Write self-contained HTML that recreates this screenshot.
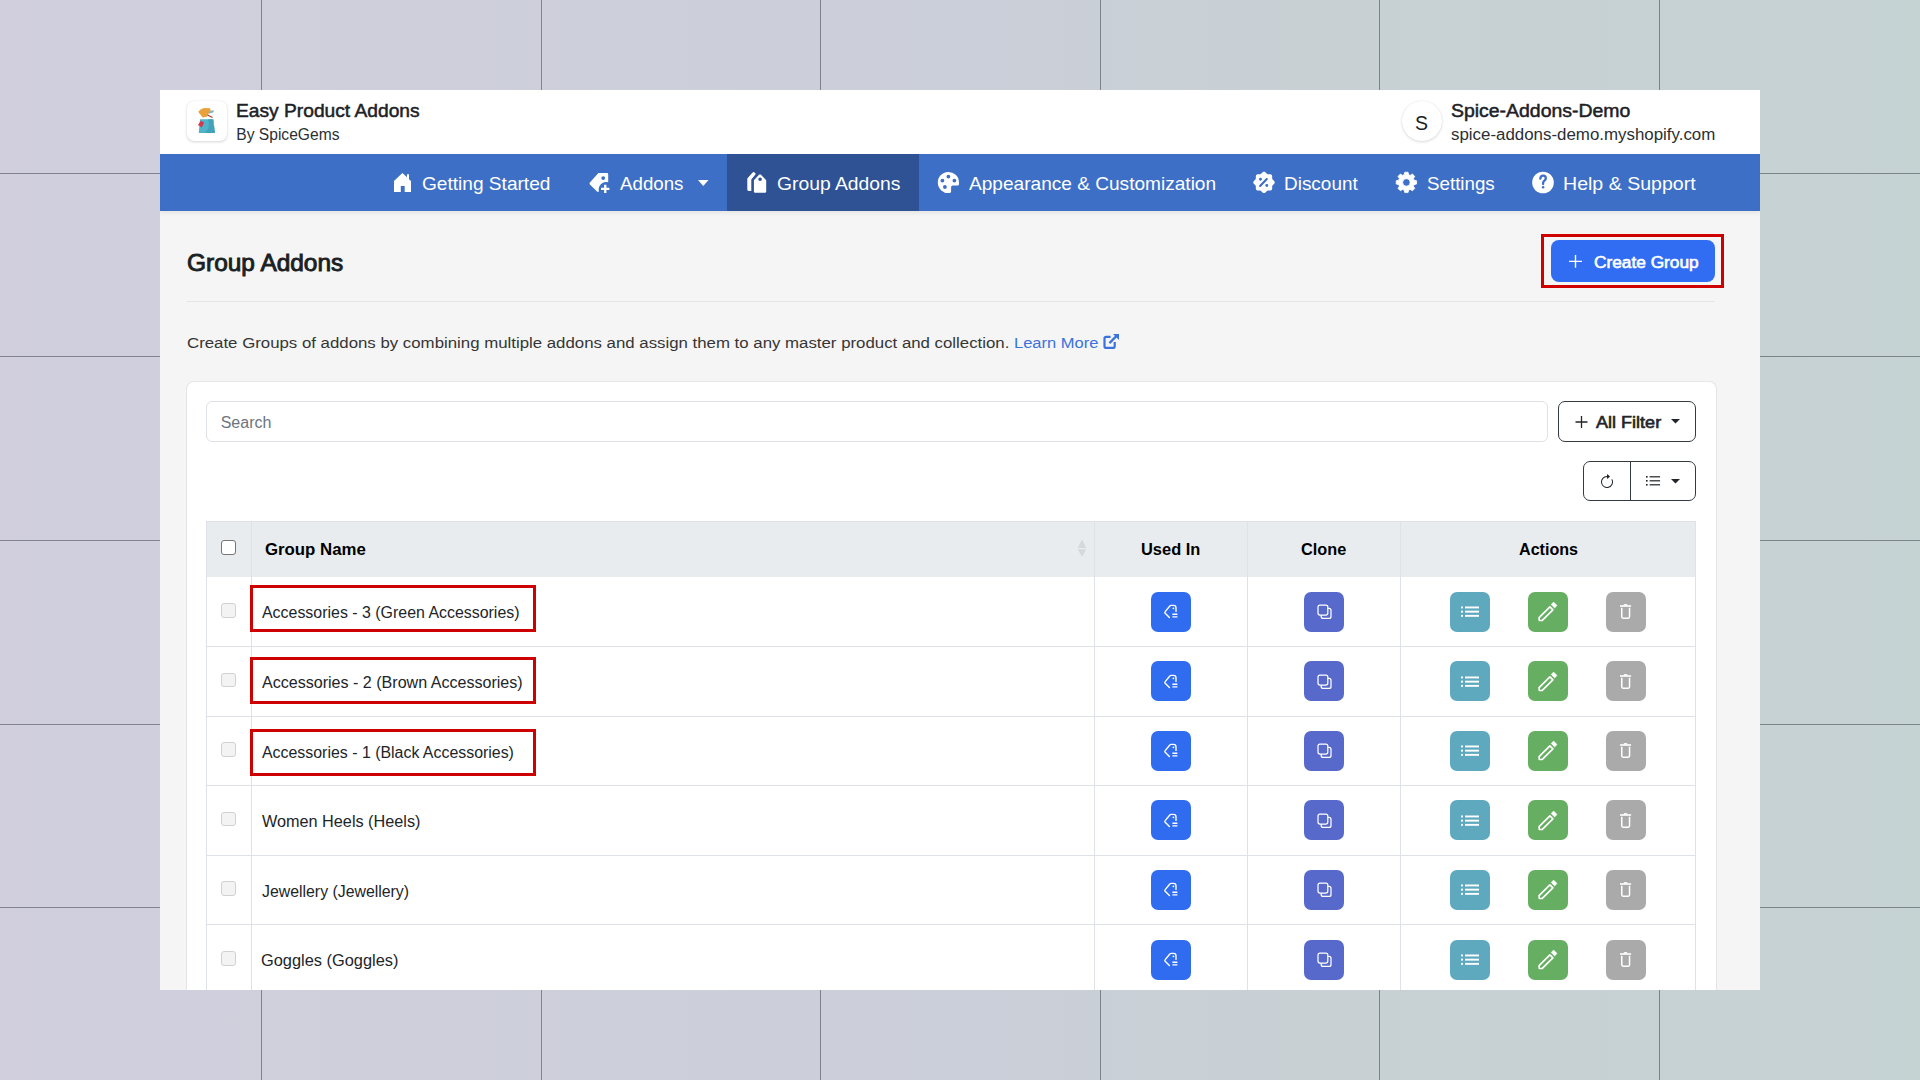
<!DOCTYPE html>
<html><head><meta charset="utf-8"><title>Group Addons</title><style>
*{margin:0;padding:0}
html,body{width:1920px;height:1080px;overflow:hidden}
body{position:relative;background:linear-gradient(90deg,#d1cfde 0%,#cbcfd9 50%,#c8d0d4 68%,#c6d3d3 100%);font-family:'Liberation Sans',sans-serif}
.a{position:absolute;display:block}
.t{position:absolute;white-space:pre;transform-origin:0 0;font-family:'Liberation Sans',sans-serif}
#panel{position:absolute;left:0;top:0;width:1920px;height:1080px;clip-path:inset(90px 160px 90px 160px)}
</style></head>
<body>
<div class="a" style="left:261px;top:0px;width:1px;height:1080px;background:rgba(25,28,38,.43)"></div>
<div class="a" style="left:541px;top:0px;width:1px;height:1080px;background:rgba(25,28,38,.43)"></div>
<div class="a" style="left:820px;top:0px;width:1px;height:1080px;background:rgba(25,28,38,.43)"></div>
<div class="a" style="left:1100px;top:0px;width:1px;height:1080px;background:rgba(25,28,38,.43)"></div>
<div class="a" style="left:1379px;top:0px;width:1px;height:1080px;background:rgba(25,28,38,.43)"></div>
<div class="a" style="left:1659px;top:0px;width:1px;height:1080px;background:rgba(25,28,38,.43)"></div>
<div class="a" style="left:0px;top:173px;width:1920px;height:1px;background:rgba(25,28,38,.43)"></div>
<div class="a" style="left:0px;top:356px;width:1920px;height:1px;background:rgba(25,28,38,.43)"></div>
<div class="a" style="left:0px;top:540px;width:1920px;height:1px;background:rgba(25,28,38,.43)"></div>
<div class="a" style="left:0px;top:724px;width:1920px;height:1px;background:rgba(25,28,38,.43)"></div>
<div class="a" style="left:0px;top:907px;width:1920px;height:1px;background:rgba(25,28,38,.43)"></div>
<div id="panel">
<div class="a" style="left:160px;top:90px;width:1600px;height:64px;background:#fff"></div>
<div class="a" style="left:160px;top:210px;width:1600px;height:780px;background:#f5f5f5"></div>
<div class="a" style="left:160px;top:154px;width:1600px;height:56.6px;background:#3e6fc6;box-shadow:0 2px 4px rgba(0,0,0,.07)"></div>
<div class="a" style="left:727px;top:154px;width:192px;height:56.6px;background:#2e5294"></div>
<div class="a" style="left:187px;top:101px;width:40px;height:40px;background:#fff;border-radius:7px;box-shadow:0 1px 3px rgba(0,0,0,.16),0 0 1px rgba(0,0,0,.10)"></div>
<svg class="a" style="left:180px;top:98px;" width="52" height="48" viewBox="0 0 52 48"><path d="M20 21.2 L33.3 21.2 L35 35 L18.8 35 Z" fill="#4fb3c9"/><path d="M28 21.2 L33.3 21.2 L35 35 L25 35 Q31 29 28 21.2Z" fill="#3d9bb3" opacity=".7"/><path d="M33.6 25 L35 26.5 L33.9 27.6 Z" fill="#fff" opacity=".8"/><path d="M18 27 L20.8 22.8 L24.2 24.5 L21.7 29.5 Z" fill="#d9364a"/><path d="M18.3 13.7 Q20.5 10.6 24.2 10 L30 10.3 L30.8 12.8 L28.3 16.2 L26.7 18.7 L22.5 19.5 L20.8 17 L19.2 15.3 Z" fill="#e9a23b"/><path d="M28.3 14.5 L31.5 12.4 L34.2 12.6 L33.2 14.6 L29.6 15.6 Z" fill="#7fb3cc"/><path d="M27.5 17 L32.5 19.5" stroke="#a8323f" stroke-width="1.2"/></svg>
<div class="a" style="left:1402px;top:101px;width:40px;height:40px;background:#fff;border-radius:50%;box-shadow:0 1px 3px rgba(0,0,0,.14),0 0 1px rgba(0,0,0,.10)"></div>
<svg class="a" style="left:388px;top:168px;" width="30" height="30" viewBox="0 0 30 30"><path d="M6 13 L14.4 4.9 L19 9.3 L19 6.3 L21 6.3 L21 11.2 L23 13 L23 23.9 L16.7 23.9 L16.7 18 L12.8 18 L12.8 23.9 L6 23.9 Z" fill="#fff"/></svg>
<svg class="a" style="left:584px;top:168px;" width="30" height="30" viewBox="0 0 30 30"><path fill-rule="evenodd" fill="#fff" d="M14.4 5 L23 5 Q24.2 5 24.2 6.2 L24.2 14.3 A7.6 7.6 0 0 0 14.9 23.6 Q14 24.4 13 23.6 L5.9 16.6 Q5 15.6 5.9 14.6 Z M17.30 10.10 a1.9 1.9 0 1 0 3.8 0 a1.9 1.9 0 1 0 -3.8 0 Z"/><path d="M21.25 16.8 V25 M17 20.9 H25.4" stroke="#fff" stroke-width="2.3"/></svg>
<svg class="a" style="left:742px;top:167px;" width="30" height="30" viewBox="0 0 30 30"><path fill="#fff" d="M5.3 11.6 L10.6 5.6 Q11.5 4.7 12.6 5.4 L13.4 6.2 Q13.9 6.9 13.4 7.6 L9.3 12.6 L9.3 23.9 L6.6 23.9 Q5.3 23.9 5.3 22.6 Z"/><path fill-rule="evenodd" fill="#fff" d="M11.9 13.3 L17 7.8 Q18 6.8 19 7.8 L24.2 13.3 L24.2 24.6 Q24.2 25.8 23 25.8 L13.1 25.8 Q11.9 25.8 11.9 24.6 Z M16.30 12.20 a1.8 1.8 0 1 0 3.6 0 a1.8 1.8 0 1 0 -3.6 0 Z"/></svg>
<svg class="a" style="left:933px;top:167px;" width="30" height="30" viewBox="0 0 30 30"><path fill-rule="evenodd" fill="#fff" d="M26 17.2 Q26 18.4 24.6 18.4 L19.6 18.4 Q18.1 18.4 18.1 20 L18.1 24.6 Q18.1 26.1 16 26.1 A10.6 10.6 0 1 1 26 15.2 Z M13.50 9.60 a1.9 1.9 0 1 0 3.8 0 a1.9 1.9 0 1 0 -3.8 0 Z M7.50 13.60 a1.9 1.9 0 1 0 3.8 0 a1.9 1.9 0 1 0 -3.8 0 Z M19.50 13.60 a1.9 1.9 0 1 0 3.8 0 a1.9 1.9 0 1 0 -3.8 0 Z M10.00 20.00 a1.9 1.9 0 1 0 3.8 0 a1.9 1.9 0 1 0 -3.8 0 Z"/></svg>
<svg class="a" style="left:1249px;top:167px;" width="30" height="30" viewBox="0 0 30 30"><path fill-rule="evenodd" fill="#fff" d="M15.00 4.70 L15.13 4.70 L15.26 4.72 L15.39 4.74 L15.52 4.78 L15.65 4.82 L15.78 4.87 L15.90 4.93 L16.02 5.00 L16.15 5.07 L16.26 5.16 L16.38 5.24 L16.49 5.33 L16.60 5.43 L16.71 5.53 L16.82 5.63 L16.92 5.74 L17.02 5.85 L17.12 5.95 L17.22 6.06 L17.31 6.16 L17.41 6.26 L17.50 6.36 L17.59 6.46 L17.68 6.55 L17.78 6.64 L17.87 6.72 L17.96 6.79 L18.05 6.87 L18.15 6.93 L18.24 6.99 L18.34 7.04 L18.44 7.09 L18.55 7.12 L18.65 7.16 L18.76 7.18 L18.88 7.21 L18.99 7.22 L19.11 7.23 L19.23 7.24 L19.36 7.24 L19.49 7.24 L19.62 7.24 L19.76 7.24 L19.90 7.23 L20.04 7.22 L20.18 7.22 L20.33 7.21 L20.47 7.21 L20.62 7.21 L20.77 7.21 L20.91 7.22 L21.06 7.23 L21.21 7.24 L21.35 7.26 L21.49 7.29 L21.63 7.32 L21.76 7.36 L21.90 7.41 L22.02 7.46 L22.14 7.52 L22.26 7.59 L22.37 7.66 L22.47 7.74 L22.57 7.83 L22.66 7.93 L22.74 8.03 L22.81 8.14 L22.88 8.26 L22.94 8.38 L22.99 8.50 L23.04 8.64 L23.08 8.77 L23.11 8.91 L23.14 9.05 L23.16 9.19 L23.17 9.34 L23.18 9.49 L23.19 9.63 L23.19 9.78 L23.19 9.93 L23.19 10.07 L23.18 10.22 L23.18 10.36 L23.17 10.50 L23.16 10.64 L23.16 10.78 L23.16 10.91 L23.16 11.04 L23.16 11.17 L23.17 11.29 L23.18 11.41 L23.19 11.52 L23.22 11.64 L23.24 11.75 L23.28 11.85 L23.31 11.96 L23.36 12.06 L23.41 12.16 L23.47 12.25 L23.53 12.35 L23.61 12.44 L23.68 12.53 L23.76 12.62 L23.85 12.72 L23.94 12.81 L24.04 12.90 L24.14 12.99 L24.24 13.09 L24.34 13.18 L24.45 13.28 L24.55 13.38 L24.66 13.48 L24.77 13.58 L24.87 13.69 L24.97 13.80 L25.07 13.91 L25.16 14.02 L25.24 14.14 L25.33 14.25 L25.40 14.38 L25.47 14.50 L25.53 14.62 L25.58 14.75 L25.62 14.88 L25.66 15.01 L25.68 15.14 L25.70 15.27 L25.70 15.40 L25.70 15.53 L25.68 15.66 L25.66 15.79 L25.62 15.92 L25.58 16.05 L25.53 16.18 L25.47 16.30 L25.40 16.42 L25.33 16.55 L25.24 16.66 L25.16 16.78 L25.07 16.89 L24.97 17.00 L24.87 17.11 L24.77 17.22 L24.66 17.32 L24.55 17.42 L24.45 17.52 L24.34 17.62 L24.24 17.71 L24.14 17.81 L24.04 17.90 L23.94 17.99 L23.85 18.08 L23.76 18.18 L23.68 18.27 L23.61 18.36 L23.53 18.45 L23.47 18.55 L23.41 18.64 L23.36 18.74 L23.31 18.84 L23.28 18.95 L23.24 19.05 L23.22 19.16 L23.19 19.28 L23.18 19.39 L23.17 19.51 L23.16 19.63 L23.16 19.76 L23.16 19.89 L23.16 20.02 L23.16 20.16 L23.17 20.30 L23.18 20.44 L23.18 20.58 L23.19 20.73 L23.19 20.87 L23.19 21.02 L23.19 21.17 L23.18 21.31 L23.17 21.46 L23.16 21.61 L23.14 21.75 L23.11 21.89 L23.08 22.03 L23.04 22.16 L22.99 22.30 L22.94 22.42 L22.88 22.54 L22.81 22.66 L22.74 22.77 L22.66 22.87 L22.57 22.97 L22.47 23.06 L22.37 23.14 L22.26 23.21 L22.14 23.28 L22.02 23.34 L21.90 23.39 L21.76 23.44 L21.63 23.48 L21.49 23.51 L21.35 23.54 L21.21 23.56 L21.06 23.57 L20.91 23.58 L20.77 23.59 L20.62 23.59 L20.47 23.59 L20.33 23.59 L20.18 23.58 L20.04 23.58 L19.90 23.57 L19.76 23.56 L19.62 23.56 L19.49 23.56 L19.36 23.56 L19.23 23.56 L19.11 23.57 L18.99 23.58 L18.88 23.59 L18.76 23.62 L18.65 23.64 L18.55 23.68 L18.44 23.71 L18.34 23.76 L18.24 23.81 L18.15 23.87 L18.05 23.93 L17.96 24.01 L17.87 24.08 L17.78 24.16 L17.68 24.25 L17.59 24.34 L17.50 24.44 L17.41 24.54 L17.31 24.64 L17.22 24.74 L17.12 24.85 L17.02 24.95 L16.92 25.06 L16.82 25.17 L16.71 25.27 L16.60 25.37 L16.49 25.47 L16.38 25.56 L16.26 25.64 L16.15 25.73 L16.02 25.80 L15.90 25.87 L15.78 25.93 L15.65 25.98 L15.52 26.02 L15.39 26.06 L15.26 26.08 L15.13 26.10 L15.00 26.10 L14.87 26.10 L14.74 26.08 L14.61 26.06 L14.48 26.02 L14.35 25.98 L14.22 25.93 L14.10 25.87 L13.98 25.80 L13.85 25.73 L13.74 25.64 L13.62 25.56 L13.51 25.47 L13.40 25.37 L13.29 25.27 L13.18 25.17 L13.08 25.06 L12.98 24.95 L12.88 24.85 L12.78 24.74 L12.69 24.64 L12.59 24.54 L12.50 24.44 L12.41 24.34 L12.32 24.25 L12.22 24.16 L12.13 24.08 L12.04 24.01 L11.95 23.93 L11.85 23.87 L11.76 23.81 L11.66 23.76 L11.56 23.71 L11.45 23.68 L11.35 23.64 L11.24 23.62 L11.12 23.59 L11.01 23.58 L10.89 23.57 L10.77 23.56 L10.64 23.56 L10.51 23.56 L10.38 23.56 L10.24 23.56 L10.10 23.57 L9.96 23.58 L9.82 23.58 L9.67 23.59 L9.53 23.59 L9.38 23.59 L9.23 23.59 L9.09 23.58 L8.94 23.57 L8.79 23.56 L8.65 23.54 L8.51 23.51 L8.37 23.48 L8.24 23.44 L8.10 23.39 L7.98 23.34 L7.86 23.28 L7.74 23.21 L7.63 23.14 L7.53 23.06 L7.43 22.97 L7.34 22.87 L7.26 22.77 L7.19 22.66 L7.12 22.54 L7.06 22.42 L7.01 22.30 L6.96 22.16 L6.92 22.03 L6.89 21.89 L6.86 21.75 L6.84 21.61 L6.83 21.46 L6.82 21.31 L6.81 21.17 L6.81 21.02 L6.81 20.87 L6.81 20.73 L6.82 20.58 L6.82 20.44 L6.83 20.30 L6.84 20.16 L6.84 20.02 L6.84 19.89 L6.84 19.76 L6.84 19.63 L6.83 19.51 L6.82 19.39 L6.81 19.28 L6.78 19.16 L6.76 19.05 L6.72 18.95 L6.69 18.84 L6.64 18.74 L6.59 18.64 L6.53 18.55 L6.47 18.45 L6.39 18.36 L6.32 18.27 L6.24 18.18 L6.15 18.08 L6.06 17.99 L5.96 17.90 L5.86 17.81 L5.76 17.71 L5.66 17.62 L5.55 17.52 L5.45 17.42 L5.34 17.32 L5.23 17.22 L5.13 17.11 L5.03 17.00 L4.93 16.89 L4.84 16.78 L4.76 16.66 L4.67 16.55 L4.60 16.42 L4.53 16.30 L4.47 16.18 L4.42 16.05 L4.38 15.92 L4.34 15.79 L4.32 15.66 L4.30 15.53 L4.30 15.40 L4.30 15.27 L4.32 15.14 L4.34 15.01 L4.38 14.88 L4.42 14.75 L4.47 14.62 L4.53 14.50 L4.60 14.38 L4.67 14.25 L4.76 14.14 L4.84 14.02 L4.93 13.91 L5.03 13.80 L5.13 13.69 L5.23 13.58 L5.34 13.48 L5.45 13.38 L5.55 13.28 L5.66 13.18 L5.76 13.09 L5.86 12.99 L5.96 12.90 L6.06 12.81 L6.15 12.72 L6.24 12.62 L6.32 12.53 L6.39 12.44 L6.47 12.35 L6.53 12.25 L6.59 12.16 L6.64 12.06 L6.69 11.96 L6.72 11.85 L6.76 11.75 L6.78 11.64 L6.81 11.52 L6.82 11.41 L6.83 11.29 L6.84 11.17 L6.84 11.04 L6.84 10.91 L6.84 10.78 L6.84 10.64 L6.83 10.50 L6.82 10.36 L6.82 10.22 L6.81 10.07 L6.81 9.93 L6.81 9.78 L6.81 9.63 L6.82 9.49 L6.83 9.34 L6.84 9.19 L6.86 9.05 L6.89 8.91 L6.92 8.77 L6.96 8.64 L7.01 8.50 L7.06 8.38 L7.12 8.26 L7.19 8.14 L7.26 8.03 L7.34 7.93 L7.43 7.83 L7.53 7.74 L7.63 7.66 L7.74 7.59 L7.86 7.52 L7.98 7.46 L8.10 7.41 L8.24 7.36 L8.37 7.32 L8.51 7.29 L8.65 7.26 L8.79 7.24 L8.94 7.23 L9.09 7.22 L9.23 7.21 L9.38 7.21 L9.53 7.21 L9.67 7.21 L9.82 7.22 L9.96 7.22 L10.10 7.23 L10.24 7.24 L10.38 7.24 L10.51 7.24 L10.64 7.24 L10.77 7.24 L10.89 7.23 L11.01 7.22 L11.12 7.21 L11.24 7.18 L11.35 7.16 L11.45 7.12 L11.56 7.09 L11.66 7.04 L11.76 6.99 L11.85 6.93 L11.95 6.87 L12.04 6.79 L12.13 6.72 L12.22 6.64 L12.32 6.55 L12.41 6.46 L12.50 6.36 L12.59 6.26 L12.69 6.16 L12.78 6.06 L12.88 5.95 L12.98 5.85 L13.08 5.74 L13.18 5.63 L13.29 5.53 L13.40 5.43 L13.51 5.33 L13.62 5.24 L13.74 5.16 L13.85 5.07 L13.98 5.00 L14.10 4.93 L14.22 4.87 L14.35 4.82 L14.48 4.78 L14.61 4.74 L14.74 4.72 L14.87 4.70 Z M10.05 12.20 a1.45 1.45 0 1 0 2.9 0 a1.45 1.45 0 1 0 -2.9 0 Z M16.35 18.50 a1.45 1.45 0 1 0 2.9 0 a1.45 1.45 0 1 0 -2.9 0 Z"/><path d="M17.8 12 L11.1 18.9" stroke="#3e6fc6" stroke-width="2.1" stroke-linecap="round"/></svg>
<svg class="a" style="left:1391px;top:167px;" width="30" height="30" viewBox="0 0 30 30"><path fill-rule="evenodd" fill="#fff" stroke="#fff" stroke-width="0.8" stroke-linejoin="round" d="M13.07 7.85 L13.76 5.23 L17.04 5.23 L17.73 7.85 L19.09 8.41 L21.43 7.05 L23.75 9.37 L22.39 11.71 L22.95 13.07 L25.57 13.76 L25.57 17.04 L22.95 17.73 L22.39 19.09 L23.75 21.43 L21.43 23.75 L19.09 22.39 L17.73 22.95 L17.04 25.57 L13.76 25.57 L13.07 22.95 L11.71 22.39 L9.37 23.75 L7.05 21.43 L8.41 19.09 L7.85 17.73 L5.23 17.04 L5.23 13.76 L7.85 13.07 L8.41 11.71 L7.05 9.37 L9.37 7.05 L11.71 8.41 Z M11.65 15.40 a3.75 3.75 0 1 0 7.5 0 a3.75 3.75 0 1 0 -7.5 0 Z"/></svg>
<svg class="a" style="left:1521px;top:160px;" width="45" height="45" viewBox="0 0 45 45"><circle cx="22" cy="22.5" r="10.8" fill="#fff"/><path d="M19.3 18.6 Q19.6 15.6 22.1 15.6 Q24.8 15.6 24.8 18.2 Q24.8 19.8 23.3 20.7 Q22.1 21.4 22.1 23.2 L22.1 24" fill="none" stroke="#3e6fc6" stroke-width="2.3" stroke-linecap="round"/><circle cx="22.1" cy="27.3" r="1.25" fill="#3e6fc6"/></svg>
<svg class="a" style="left:690px;top:170px;" width="25" height="25" viewBox="0 0 25 25"><path d="M8 10 L18.5 10 L13.25 16 Z" fill="#fff"/></svg>
<div class="a" style="left:187px;top:300.5px;width:1528px;height:1.3px;background:#e2e4e7"></div>
<div class="a" style="left:1541px;top:234px;width:183px;height:54px;box-sizing:border-box;border:3px solid #cf0000"></div>
<div class="a" style="left:1551px;top:240px;width:164px;height:41.5px;background:#316df2;border-radius:8px"></div>
<svg class="a" style="left:1565px;top:251px;" width="21" height="21" viewBox="0 0 21 21"><path d="M10.5 4 V16.7 M4 10.35 H17" stroke="#fff" stroke-width="1.4"/></svg>
<svg class="a" style="left:1102px;top:332px;" width="19" height="19" viewBox="0 0 19 19"><path d="M8.6 4.9 H4.2 Q2.5 4.9 2.5 6.6 V14.2 Q2.5 15.9 4.2 15.9 H11 Q12.7 15.9 12.7 14.2 V10" fill="none" stroke="#3a72de" stroke-width="2.2"/><path d="M7.4 11.1 L14.6 3.9" stroke="#3a72de" stroke-width="2.2"/><path d="M11 1.9 H17 V7.9 Z" fill="#3a72de"/></svg>
<div class="a" style="left:186.5px;top:381.5px;width:1529px;height:640px;background:#fff;border-radius:7px;box-shadow:0 0 0 1px rgba(0,0,0,.06),0 1px 2px rgba(0,0,0,.04)"></div>
<div class="a" style="left:206px;top:401px;width:1342px;height:41px;box-sizing:border-box;border:1px solid #dee2e6;border-radius:6px;background:#fff"></div>
<div class="a" style="left:1558px;top:401px;width:138px;height:41px;box-sizing:border-box;border:1.5px solid #343a40;border-radius:7px"></div>
<svg class="a" style="left:1572px;top:413px;" width="19" height="19" viewBox="0 0 19 19"><path d="M9.5 3 V15 M3.5 9 H15.5" stroke="#212529" stroke-width="1.3"/></svg>
<svg class="a" style="left:1668px;top:416px;" width="15" height="10" viewBox="0 0 15 10"><path d="M3 3 L12 3 L7.5 7.4 Z" fill="#212529"/></svg>
<div class="a" style="left:1583px;top:461px;width:113px;height:40px;box-sizing:border-box;border:1.5px solid #343a40;border-radius:7px"></div>
<div class="a" style="left:1629.5px;top:461px;width:1.5px;height:40px;background:#343a40"></div>
<svg class="a" style="left:1598.7px;top:474.2px;" width="16" height="16" viewBox="0 0 16 16"><path fill="#212529" fill-rule="evenodd" d="M8 3a5 5 0 1 0 4.546 2.914.5.5 0 0 1 .908-.417A6 6 0 1 1 8 2z"/><path fill="#212529" d="M8 4.466V.534a.25.25 0 0 1 .41-.192l2.36 1.966c.12.1.12.284 0 .384L8.41 4.658A.25.25 0 0 1 8 4.466"/></svg>
<svg class="a" style="left:1645px;top:475px;" width="16" height="12" viewBox="0 0 16 12"><g fill="#212529"><rect x="1" y="1" width="1.6" height="1.6"/><rect x="1" y="5" width="1.6" height="1.6"/><rect x="1" y="9" width="1.6" height="1.6"/><rect x="4.6" y="1.2" width="10.5" height="1.2"/><rect x="4.6" y="5.2" width="10.5" height="1.2"/><rect x="4.6" y="9.2" width="10.5" height="1.2"/></g></svg>
<svg class="a" style="left:1668px;top:476px;" width="15" height="10" viewBox="0 0 15 10"><path d="M3 3 L12 3 L7.5 7.4 Z" fill="#212529"/></svg>
<div class="a" style="left:206px;top:521px;width:1490px;height:56px;background:#e9ecef"></div>
<div class="a" style="left:206px;top:521px;width:1490px;height:1px;background:#dee2e6"></div>
<div class="a" style="left:206px;top:521px;width:1px;height:480px;background:#dee2e6"></div>
<div class="a" style="left:251px;top:521px;width:1px;height:480px;background:#dee2e6"></div>
<div class="a" style="left:1094px;top:521px;width:1px;height:480px;background:#dee2e6"></div>
<div class="a" style="left:1247px;top:521px;width:1px;height:480px;background:#dee2e6"></div>
<div class="a" style="left:1400px;top:521px;width:1px;height:480px;background:#dee2e6"></div>
<div class="a" style="left:1695px;top:521px;width:1px;height:480px;background:#dee2e6"></div>
<div class="a" style="left:206px;top:646px;width:1490px;height:1px;background:#dee2e6"></div>
<div class="a" style="left:206px;top:716px;width:1490px;height:1px;background:#dee2e6"></div>
<div class="a" style="left:206px;top:785px;width:1490px;height:1px;background:#dee2e6"></div>
<div class="a" style="left:206px;top:855px;width:1490px;height:1px;background:#dee2e6"></div>
<div class="a" style="left:206px;top:924px;width:1490px;height:1px;background:#dee2e6"></div>
<div class="a" style="left:221px;top:540px;width:15px;height:15px;box-sizing:border-box;border:1.5px solid #767676;border-radius:3px;background:#fff"></div>
<svg class="a" style="left:1076px;top:538px;" width="12" height="20" viewBox="0 0 12 20"><path d="M1.6 10 L6 1.6 L10.4 10 Z M1.6 11.3 L6 18.7 L10.4 11.3 Z" fill="#d6d8da"/></svg>
<div class="a" style="left:221px;top:603.0px;width:14.5px;height:14.5px;box-sizing:border-box;border:1px solid #cfd2d5;border-radius:3px;background:#f3f3f3"></div>
<div class="a" style="left:1150.5px;top:591.5px;width:40px;height:40px;background:#306cf0;border-radius:7px"></div>
<svg class="a" style="left:1163.5px;top:604.0px;" width="14" height="15" viewBox="0 0 14 15"><path d="M5.4 13.6 L1.2 9.2 Q0.5 8.4 1.2 7.6 L5.6 2.2 Q6.3 1.4 7.2 1.4 L9.6 1.4 Q12 1.4 12 3.9 L12 7.4" fill="none" stroke="#fff" stroke-width="1.4" stroke-linecap="round" stroke-linejoin="round"/><circle cx="9.4" cy="4.3" r="0.9" fill="#fff"/><path d="M8.4 10.2 H13.4 M8.4 12.9 H13.4" stroke="#fff" stroke-width="1.4"/></svg>
<div class="a" style="left:1303.5px;top:591.5px;width:40px;height:40px;background:#5869cc;border-radius:7px"></div>
<svg class="a" style="left:1316.5px;top:604.0px;" width="16" height="16" viewBox="0 0 16 16"><rect x="4.2" y="4.4" width="9.8" height="10" rx="2" fill="none" stroke="#fff" stroke-width="1.25"/><rect x="1" y="1" width="9.8" height="10" rx="2" fill="#5869cc" stroke="#fff" stroke-width="1.25"/></svg>
<div class="a" style="left:1450px;top:591.5px;width:40px;height:40px;background:#5ea9be;border-radius:7px"></div>
<svg class="a" style="left:1454px;top:596.0px;" width="32" height="30" viewBox="0 0 32 30"><g fill="#fff"><rect x="7" y="10.50" width="2" height="1.9"/><rect x="11" y="10.50" width="14" height="1.9"/><rect x="7" y="14.70" width="2" height="1.9"/><rect x="11" y="14.70" width="14" height="1.9"/><rect x="7" y="18.90" width="2" height="1.9"/><rect x="11" y="18.90" width="14" height="1.9"/></g></svg>
<div class="a" style="left:1528px;top:591.5px;width:40px;height:40px;background:#66ae62;border-radius:7px"></div>
<svg class="a" style="left:1530px;top:596.0px;" width="36" height="30" viewBox="0 0 36 30"><path d="M19.9 10.9 L22.9 13.9 L12.3 24.3 L9.3 24.5 L9.1 21.6 Z" fill="none" stroke="#fff" stroke-width="1.7" stroke-linejoin="round"/><path d="M21.2 8.5 L23.6 6.1 L27 9.5 L24.6 11.9 Z" fill="#fff" stroke="#fff" stroke-width="0.6" stroke-linejoin="round"/></svg>
<div class="a" style="left:1606px;top:591.5px;width:40px;height:40px;background:#aaaaaa;border-radius:7px"></div>
<svg class="a" style="left:1610px;top:596.0px;" width="32" height="30" viewBox="0 0 32 30"><path d="M10 9.2 H21.1 V10.8 H10 Z" fill="#fff"/><path d="M13.3 9.4 Q13.6 8 15.5 8 Q17.5 8 17.8 9.4 Z" fill="#fff"/><path d="M11.75 11.8 V20.8 Q11.75 22.15 13.1 22.15 H18.2 Q19.55 22.15 19.55 20.8 V11.8" fill="none" stroke="#fff" stroke-width="1.5"/></svg>
<div class="a" style="left:221px;top:672.6px;width:14.5px;height:14.5px;box-sizing:border-box;border:1px solid #cfd2d5;border-radius:3px;background:#f3f3f3"></div>
<div class="a" style="left:1150.5px;top:661.1px;width:40px;height:40px;background:#306cf0;border-radius:7px"></div>
<svg class="a" style="left:1163.5px;top:673.6px;" width="14" height="15" viewBox="0 0 14 15"><path d="M5.4 13.6 L1.2 9.2 Q0.5 8.4 1.2 7.6 L5.6 2.2 Q6.3 1.4 7.2 1.4 L9.6 1.4 Q12 1.4 12 3.9 L12 7.4" fill="none" stroke="#fff" stroke-width="1.4" stroke-linecap="round" stroke-linejoin="round"/><circle cx="9.4" cy="4.3" r="0.9" fill="#fff"/><path d="M8.4 10.2 H13.4 M8.4 12.9 H13.4" stroke="#fff" stroke-width="1.4"/></svg>
<div class="a" style="left:1303.5px;top:661.1px;width:40px;height:40px;background:#5869cc;border-radius:7px"></div>
<svg class="a" style="left:1316.5px;top:673.6px;" width="16" height="16" viewBox="0 0 16 16"><rect x="4.2" y="4.4" width="9.8" height="10" rx="2" fill="none" stroke="#fff" stroke-width="1.25"/><rect x="1" y="1" width="9.8" height="10" rx="2" fill="#5869cc" stroke="#fff" stroke-width="1.25"/></svg>
<div class="a" style="left:1450px;top:661.1px;width:40px;height:40px;background:#5ea9be;border-radius:7px"></div>
<svg class="a" style="left:1454px;top:665.6px;" width="32" height="30" viewBox="0 0 32 30"><g fill="#fff"><rect x="7" y="10.50" width="2" height="1.9"/><rect x="11" y="10.50" width="14" height="1.9"/><rect x="7" y="14.70" width="2" height="1.9"/><rect x="11" y="14.70" width="14" height="1.9"/><rect x="7" y="18.90" width="2" height="1.9"/><rect x="11" y="18.90" width="14" height="1.9"/></g></svg>
<div class="a" style="left:1528px;top:661.1px;width:40px;height:40px;background:#66ae62;border-radius:7px"></div>
<svg class="a" style="left:1530px;top:665.6px;" width="36" height="30" viewBox="0 0 36 30"><path d="M19.9 10.9 L22.9 13.9 L12.3 24.3 L9.3 24.5 L9.1 21.6 Z" fill="none" stroke="#fff" stroke-width="1.7" stroke-linejoin="round"/><path d="M21.2 8.5 L23.6 6.1 L27 9.5 L24.6 11.9 Z" fill="#fff" stroke="#fff" stroke-width="0.6" stroke-linejoin="round"/></svg>
<div class="a" style="left:1606px;top:661.1px;width:40px;height:40px;background:#aaaaaa;border-radius:7px"></div>
<svg class="a" style="left:1610px;top:665.6px;" width="32" height="30" viewBox="0 0 32 30"><path d="M10 9.2 H21.1 V10.8 H10 Z" fill="#fff"/><path d="M13.3 9.4 Q13.6 8 15.5 8 Q17.5 8 17.8 9.4 Z" fill="#fff"/><path d="M11.75 11.8 V20.8 Q11.75 22.15 13.1 22.15 H18.2 Q19.55 22.15 19.55 20.8 V11.8" fill="none" stroke="#fff" stroke-width="1.5"/></svg>
<div class="a" style="left:221px;top:742.2px;width:14.5px;height:14.5px;box-sizing:border-box;border:1px solid #cfd2d5;border-radius:3px;background:#f3f3f3"></div>
<div class="a" style="left:1150.5px;top:730.7px;width:40px;height:40px;background:#306cf0;border-radius:7px"></div>
<svg class="a" style="left:1163.5px;top:743.2px;" width="14" height="15" viewBox="0 0 14 15"><path d="M5.4 13.6 L1.2 9.2 Q0.5 8.4 1.2 7.6 L5.6 2.2 Q6.3 1.4 7.2 1.4 L9.6 1.4 Q12 1.4 12 3.9 L12 7.4" fill="none" stroke="#fff" stroke-width="1.4" stroke-linecap="round" stroke-linejoin="round"/><circle cx="9.4" cy="4.3" r="0.9" fill="#fff"/><path d="M8.4 10.2 H13.4 M8.4 12.9 H13.4" stroke="#fff" stroke-width="1.4"/></svg>
<div class="a" style="left:1303.5px;top:730.7px;width:40px;height:40px;background:#5869cc;border-radius:7px"></div>
<svg class="a" style="left:1316.5px;top:743.2px;" width="16" height="16" viewBox="0 0 16 16"><rect x="4.2" y="4.4" width="9.8" height="10" rx="2" fill="none" stroke="#fff" stroke-width="1.25"/><rect x="1" y="1" width="9.8" height="10" rx="2" fill="#5869cc" stroke="#fff" stroke-width="1.25"/></svg>
<div class="a" style="left:1450px;top:730.7px;width:40px;height:40px;background:#5ea9be;border-radius:7px"></div>
<svg class="a" style="left:1454px;top:735.2px;" width="32" height="30" viewBox="0 0 32 30"><g fill="#fff"><rect x="7" y="10.50" width="2" height="1.9"/><rect x="11" y="10.50" width="14" height="1.9"/><rect x="7" y="14.70" width="2" height="1.9"/><rect x="11" y="14.70" width="14" height="1.9"/><rect x="7" y="18.90" width="2" height="1.9"/><rect x="11" y="18.90" width="14" height="1.9"/></g></svg>
<div class="a" style="left:1528px;top:730.7px;width:40px;height:40px;background:#66ae62;border-radius:7px"></div>
<svg class="a" style="left:1530px;top:735.2px;" width="36" height="30" viewBox="0 0 36 30"><path d="M19.9 10.9 L22.9 13.9 L12.3 24.3 L9.3 24.5 L9.1 21.6 Z" fill="none" stroke="#fff" stroke-width="1.7" stroke-linejoin="round"/><path d="M21.2 8.5 L23.6 6.1 L27 9.5 L24.6 11.9 Z" fill="#fff" stroke="#fff" stroke-width="0.6" stroke-linejoin="round"/></svg>
<div class="a" style="left:1606px;top:730.7px;width:40px;height:40px;background:#aaaaaa;border-radius:7px"></div>
<svg class="a" style="left:1610px;top:735.2px;" width="32" height="30" viewBox="0 0 32 30"><path d="M10 9.2 H21.1 V10.8 H10 Z" fill="#fff"/><path d="M13.3 9.4 Q13.6 8 15.5 8 Q17.5 8 17.8 9.4 Z" fill="#fff"/><path d="M11.75 11.8 V20.8 Q11.75 22.15 13.1 22.15 H18.2 Q19.55 22.15 19.55 20.8 V11.8" fill="none" stroke="#fff" stroke-width="1.5"/></svg>
<div class="a" style="left:221px;top:811.8px;width:14.5px;height:14.5px;box-sizing:border-box;border:1px solid #cfd2d5;border-radius:3px;background:#f3f3f3"></div>
<div class="a" style="left:1150.5px;top:800.3px;width:40px;height:40px;background:#306cf0;border-radius:7px"></div>
<svg class="a" style="left:1163.5px;top:812.8px;" width="14" height="15" viewBox="0 0 14 15"><path d="M5.4 13.6 L1.2 9.2 Q0.5 8.4 1.2 7.6 L5.6 2.2 Q6.3 1.4 7.2 1.4 L9.6 1.4 Q12 1.4 12 3.9 L12 7.4" fill="none" stroke="#fff" stroke-width="1.4" stroke-linecap="round" stroke-linejoin="round"/><circle cx="9.4" cy="4.3" r="0.9" fill="#fff"/><path d="M8.4 10.2 H13.4 M8.4 12.9 H13.4" stroke="#fff" stroke-width="1.4"/></svg>
<div class="a" style="left:1303.5px;top:800.3px;width:40px;height:40px;background:#5869cc;border-radius:7px"></div>
<svg class="a" style="left:1316.5px;top:812.8px;" width="16" height="16" viewBox="0 0 16 16"><rect x="4.2" y="4.4" width="9.8" height="10" rx="2" fill="none" stroke="#fff" stroke-width="1.25"/><rect x="1" y="1" width="9.8" height="10" rx="2" fill="#5869cc" stroke="#fff" stroke-width="1.25"/></svg>
<div class="a" style="left:1450px;top:800.3px;width:40px;height:40px;background:#5ea9be;border-radius:7px"></div>
<svg class="a" style="left:1454px;top:804.8px;" width="32" height="30" viewBox="0 0 32 30"><g fill="#fff"><rect x="7" y="10.50" width="2" height="1.9"/><rect x="11" y="10.50" width="14" height="1.9"/><rect x="7" y="14.70" width="2" height="1.9"/><rect x="11" y="14.70" width="14" height="1.9"/><rect x="7" y="18.90" width="2" height="1.9"/><rect x="11" y="18.90" width="14" height="1.9"/></g></svg>
<div class="a" style="left:1528px;top:800.3px;width:40px;height:40px;background:#66ae62;border-radius:7px"></div>
<svg class="a" style="left:1530px;top:804.8px;" width="36" height="30" viewBox="0 0 36 30"><path d="M19.9 10.9 L22.9 13.9 L12.3 24.3 L9.3 24.5 L9.1 21.6 Z" fill="none" stroke="#fff" stroke-width="1.7" stroke-linejoin="round"/><path d="M21.2 8.5 L23.6 6.1 L27 9.5 L24.6 11.9 Z" fill="#fff" stroke="#fff" stroke-width="0.6" stroke-linejoin="round"/></svg>
<div class="a" style="left:1606px;top:800.3px;width:40px;height:40px;background:#aaaaaa;border-radius:7px"></div>
<svg class="a" style="left:1610px;top:804.8px;" width="32" height="30" viewBox="0 0 32 30"><path d="M10 9.2 H21.1 V10.8 H10 Z" fill="#fff"/><path d="M13.3 9.4 Q13.6 8 15.5 8 Q17.5 8 17.8 9.4 Z" fill="#fff"/><path d="M11.75 11.8 V20.8 Q11.75 22.15 13.1 22.15 H18.2 Q19.55 22.15 19.55 20.8 V11.8" fill="none" stroke="#fff" stroke-width="1.5"/></svg>
<div class="a" style="left:221px;top:881.4px;width:14.5px;height:14.5px;box-sizing:border-box;border:1px solid #cfd2d5;border-radius:3px;background:#f3f3f3"></div>
<div class="a" style="left:1150.5px;top:869.9px;width:40px;height:40px;background:#306cf0;border-radius:7px"></div>
<svg class="a" style="left:1163.5px;top:882.4px;" width="14" height="15" viewBox="0 0 14 15"><path d="M5.4 13.6 L1.2 9.2 Q0.5 8.4 1.2 7.6 L5.6 2.2 Q6.3 1.4 7.2 1.4 L9.6 1.4 Q12 1.4 12 3.9 L12 7.4" fill="none" stroke="#fff" stroke-width="1.4" stroke-linecap="round" stroke-linejoin="round"/><circle cx="9.4" cy="4.3" r="0.9" fill="#fff"/><path d="M8.4 10.2 H13.4 M8.4 12.9 H13.4" stroke="#fff" stroke-width="1.4"/></svg>
<div class="a" style="left:1303.5px;top:869.9px;width:40px;height:40px;background:#5869cc;border-radius:7px"></div>
<svg class="a" style="left:1316.5px;top:882.4px;" width="16" height="16" viewBox="0 0 16 16"><rect x="4.2" y="4.4" width="9.8" height="10" rx="2" fill="none" stroke="#fff" stroke-width="1.25"/><rect x="1" y="1" width="9.8" height="10" rx="2" fill="#5869cc" stroke="#fff" stroke-width="1.25"/></svg>
<div class="a" style="left:1450px;top:869.9px;width:40px;height:40px;background:#5ea9be;border-radius:7px"></div>
<svg class="a" style="left:1454px;top:874.4px;" width="32" height="30" viewBox="0 0 32 30"><g fill="#fff"><rect x="7" y="10.50" width="2" height="1.9"/><rect x="11" y="10.50" width="14" height="1.9"/><rect x="7" y="14.70" width="2" height="1.9"/><rect x="11" y="14.70" width="14" height="1.9"/><rect x="7" y="18.90" width="2" height="1.9"/><rect x="11" y="18.90" width="14" height="1.9"/></g></svg>
<div class="a" style="left:1528px;top:869.9px;width:40px;height:40px;background:#66ae62;border-radius:7px"></div>
<svg class="a" style="left:1530px;top:874.4px;" width="36" height="30" viewBox="0 0 36 30"><path d="M19.9 10.9 L22.9 13.9 L12.3 24.3 L9.3 24.5 L9.1 21.6 Z" fill="none" stroke="#fff" stroke-width="1.7" stroke-linejoin="round"/><path d="M21.2 8.5 L23.6 6.1 L27 9.5 L24.6 11.9 Z" fill="#fff" stroke="#fff" stroke-width="0.6" stroke-linejoin="round"/></svg>
<div class="a" style="left:1606px;top:869.9px;width:40px;height:40px;background:#aaaaaa;border-radius:7px"></div>
<svg class="a" style="left:1610px;top:874.4px;" width="32" height="30" viewBox="0 0 32 30"><path d="M10 9.2 H21.1 V10.8 H10 Z" fill="#fff"/><path d="M13.3 9.4 Q13.6 8 15.5 8 Q17.5 8 17.8 9.4 Z" fill="#fff"/><path d="M11.75 11.8 V20.8 Q11.75 22.15 13.1 22.15 H18.2 Q19.55 22.15 19.55 20.8 V11.8" fill="none" stroke="#fff" stroke-width="1.5"/></svg>
<div class="a" style="left:221px;top:951.0px;width:14.5px;height:14.5px;box-sizing:border-box;border:1px solid #cfd2d5;border-radius:3px;background:#f3f3f3"></div>
<div class="a" style="left:1150.5px;top:939.5px;width:40px;height:40px;background:#306cf0;border-radius:7px"></div>
<svg class="a" style="left:1163.5px;top:952.0px;" width="14" height="15" viewBox="0 0 14 15"><path d="M5.4 13.6 L1.2 9.2 Q0.5 8.4 1.2 7.6 L5.6 2.2 Q6.3 1.4 7.2 1.4 L9.6 1.4 Q12 1.4 12 3.9 L12 7.4" fill="none" stroke="#fff" stroke-width="1.4" stroke-linecap="round" stroke-linejoin="round"/><circle cx="9.4" cy="4.3" r="0.9" fill="#fff"/><path d="M8.4 10.2 H13.4 M8.4 12.9 H13.4" stroke="#fff" stroke-width="1.4"/></svg>
<div class="a" style="left:1303.5px;top:939.5px;width:40px;height:40px;background:#5869cc;border-radius:7px"></div>
<svg class="a" style="left:1316.5px;top:952.0px;" width="16" height="16" viewBox="0 0 16 16"><rect x="4.2" y="4.4" width="9.8" height="10" rx="2" fill="none" stroke="#fff" stroke-width="1.25"/><rect x="1" y="1" width="9.8" height="10" rx="2" fill="#5869cc" stroke="#fff" stroke-width="1.25"/></svg>
<div class="a" style="left:1450px;top:939.5px;width:40px;height:40px;background:#5ea9be;border-radius:7px"></div>
<svg class="a" style="left:1454px;top:944.0px;" width="32" height="30" viewBox="0 0 32 30"><g fill="#fff"><rect x="7" y="10.50" width="2" height="1.9"/><rect x="11" y="10.50" width="14" height="1.9"/><rect x="7" y="14.70" width="2" height="1.9"/><rect x="11" y="14.70" width="14" height="1.9"/><rect x="7" y="18.90" width="2" height="1.9"/><rect x="11" y="18.90" width="14" height="1.9"/></g></svg>
<div class="a" style="left:1528px;top:939.5px;width:40px;height:40px;background:#66ae62;border-radius:7px"></div>
<svg class="a" style="left:1530px;top:944.0px;" width="36" height="30" viewBox="0 0 36 30"><path d="M19.9 10.9 L22.9 13.9 L12.3 24.3 L9.3 24.5 L9.1 21.6 Z" fill="none" stroke="#fff" stroke-width="1.7" stroke-linejoin="round"/><path d="M21.2 8.5 L23.6 6.1 L27 9.5 L24.6 11.9 Z" fill="#fff" stroke="#fff" stroke-width="0.6" stroke-linejoin="round"/></svg>
<div class="a" style="left:1606px;top:939.5px;width:40px;height:40px;background:#aaaaaa;border-radius:7px"></div>
<svg class="a" style="left:1610px;top:944.0px;" width="32" height="30" viewBox="0 0 32 30"><path d="M10 9.2 H21.1 V10.8 H10 Z" fill="#fff"/><path d="M13.3 9.4 Q13.6 8 15.5 8 Q17.5 8 17.8 9.4 Z" fill="#fff"/><path d="M11.75 11.8 V20.8 Q11.75 22.15 13.1 22.15 H18.2 Q19.55 22.15 19.55 20.8 V11.8" fill="none" stroke="#fff" stroke-width="1.5"/></svg>
<div class="a" style="left:250px;top:585px;width:286px;height:47px;box-sizing:border-box;border:3px solid #cf0000"></div>
<div class="a" style="left:250px;top:657px;width:286px;height:47px;box-sizing:border-box;border:3px solid #cf0000"></div>
<div class="a" style="left:250px;top:729px;width:286px;height:47px;box-sizing:border-box;border:3px solid #cf0000"></div>
<div class="t" style="left:236.28px;top:99.33px;font-size:18.8px;line-height:23.5px;font-weight:400;color:#1d2126;transform:scaleX(1.0225);-webkit-text-stroke:0.5px #1d2126">Easy Product Addons</div>
<div class="t" style="left:236.30px;top:124.74px;font-size:15.6px;line-height:19.5px;font-weight:400;color:#2b2f33;">By SpiceGems</div>
<div class="t" style="left:1450.67px;top:98.83px;font-size:18.8px;line-height:23.5px;font-weight:400;color:#1d2126;transform:scaleX(1.0349);-webkit-text-stroke:0.5px #1d2126">Spice-Addons-Demo</div>
<div class="t" style="left:1450.62px;top:124.64px;font-size:15.6px;line-height:19.5px;font-weight:400;color:#2b2f33;transform:scaleX(1.0826);">spice-addons-demo.myshopify.com</div>
<div class="t" style="left:1415.00px;top:110.65px;font-size:19.5px;line-height:24.38px;font-weight:400;color:#1b1f24;">S</div>
<div class="t" style="left:422.40px;top:172.34px;font-size:19px;line-height:23.75px;font-weight:400;color:#ffffff;transform:scaleX(1.0048);">Getting Started</div>
<div class="t" style="left:620.00px;top:172.34px;font-size:19px;line-height:23.75px;font-weight:400;color:#ffffff;transform:scaleX(0.9844);">Addons</div>
<div class="t" style="left:776.78px;top:172.34px;font-size:19px;line-height:23.75px;font-weight:400;color:#ffffff;transform:scaleX(1.0158);">Group Addons</div>
<div class="t" style="left:969.00px;top:172.34px;font-size:19px;line-height:23.75px;font-weight:400;color:#ffffff;transform:scaleX(1.0041);">Appearance &amp; Customization</div>
<div class="t" style="left:1284.00px;top:172.34px;font-size:19px;line-height:23.75px;font-weight:400;color:#ffffff;transform:scaleX(0.9973);">Discount</div>
<div class="t" style="left:1426.71px;top:172.34px;font-size:19px;line-height:23.75px;font-weight:400;color:#ffffff;transform:scaleX(0.9866);">Settings</div>
<div class="t" style="left:1562.77px;top:172.34px;font-size:19px;line-height:23.75px;font-weight:400;color:#ffffff;transform:scaleX(1.0297);">Help &amp; Support</div>
<div class="t" style="left:187.16px;top:248.77px;font-size:23.6px;line-height:29.5px;font-weight:400;color:#1b1f24;transform:scaleX(1.0360);-webkit-text-stroke:0.9px #1b1f24">Group Addons</div>
<div class="t" style="left:1594.00px;top:253.05px;font-size:16px;line-height:20.0px;font-weight:400;color:#ffffff;transform:scaleX(1.0794);-webkit-text-stroke:0.6px #ffffff">Create Group</div>
<div class="t" style="left:186.91px;top:333.24px;font-size:15.4px;line-height:19.25px;font-weight:400;color:#353535;transform:scaleX(1.0923);">Create Groups of addons by combining multiple addons and assign them to any master product and collection.</div>
<div class="t" style="left:1013.63px;top:333.24px;font-size:15.4px;line-height:19.25px;font-weight:400;color:#3a72de;transform:scaleX(1.0714);">Learn More</div>
<div class="t" style="left:220.70px;top:413.25px;font-size:16px;line-height:20.0px;font-weight:400;color:#6c757d;">Search</div>
<div class="t" style="left:1595.60px;top:413.25px;font-size:16px;line-height:20.0px;font-weight:400;color:#212529;transform:scaleX(1.1276);-webkit-text-stroke:0.6px #212529">All Filter</div>
<div class="t" style="left:264.85px;top:540.25px;font-size:16px;line-height:20.0px;font-weight:700;color:#000000;transform:scaleX(1.0495);">Group Name</div>
<div class="t" style="left:1140.87px;top:540.25px;font-size:16px;line-height:20.0px;font-weight:700;color:#000000;transform:scaleX(1.0268);">Used In</div>
<div class="t" style="left:1300.88px;top:540.25px;font-size:16px;line-height:20.0px;font-weight:700;color:#000000;transform:scaleX(1.0163);">Clone</div>
<div class="t" style="left:1518.60px;top:540.25px;font-size:16px;line-height:20.0px;font-weight:700;color:#000000;transform:scaleX(1.0069);">Actions</div>
<div class="t" style="left:261.70px;top:603.45px;font-size:16px;line-height:20.0px;font-weight:400;color:#212529;transform:scaleX(0.9953);">Accessories - 3 (Green Accessories)</div>
<div class="t" style="left:261.70px;top:673.05px;font-size:16px;line-height:20.0px;font-weight:400;color:#212529;transform:scaleX(1.0039);">Accessories - 2 (Brown Accessories)</div>
<div class="t" style="left:261.70px;top:742.65px;font-size:16px;line-height:20.0px;font-weight:400;color:#212529;transform:scaleX(0.9941);">Accessories - 1 (Black Accessories)</div>
<div class="t" style="left:261.70px;top:812.25px;font-size:16px;line-height:20.0px;font-weight:400;color:#212529;transform:scaleX(1.0142);">Women Heels (Heels)</div>
<div class="t" style="left:261.70px;top:881.85px;font-size:16px;line-height:20.0px;font-weight:400;color:#212529;transform:scaleX(0.9905);">Jewellery (Jewellery)</div>
<div class="t" style="left:260.68px;top:951.45px;font-size:16px;line-height:20.0px;font-weight:400;color:#212529;transform:scaleX(1.0233);">Goggles (Goggles)</div>
</div>
</body></html>
